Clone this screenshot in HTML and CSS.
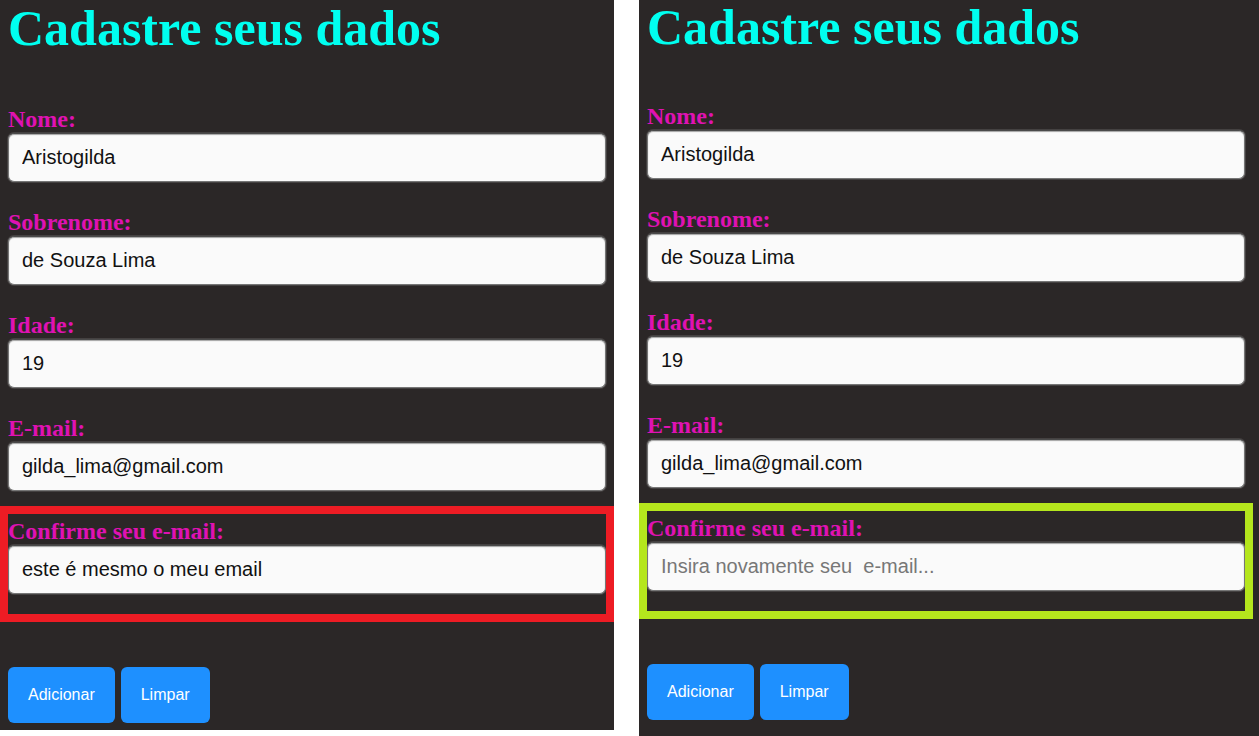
FILE: index.html
```html
<!DOCTYPE html>
<html lang="pt-BR">
<head>
<meta charset="utf-8">
<title>Cadastre seus dados</title>
<link rel="stylesheet" href="styles.css">
</head>
<body>
<div class="shots">
  <section class="panel panel--left">
    <h1 class="title">Cadastre seus dados</h1>
    <form class="form">
      <div class="field">
        <label class="label">Nome:</label>
        <input class="input" type="text" value="Aristogilda">
      </div>
      <div class="field">
        <label class="label">Sobrenome:</label>
        <input class="input" type="text" value="de Souza Lima">
      </div>
      <div class="field">
        <label class="label">Idade:</label>
        <input class="input" type="text" value="19">
      </div>
      <div class="field">
        <label class="label">E-mail:</label>
        <input class="input" type="text" value="gilda_lima@gmail.com">
      </div>
      <div class="field field--confirm field--error">
        <label class="label">Confirme seu e-mail:</label>
        <input class="input" type="text" value="este é mesmo o meu email">
      </div>
      <div class="actions">
        <button type="button" class="btn">Adicionar</button>
        <button type="button" class="btn">Limpar</button>
      </div>
    </form>
  </section>
  <section class="panel panel--right">
    <h1 class="title">Cadastre seus dados</h1>
    <form class="form">
      <div class="field">
        <label class="label">Nome:</label>
        <input class="input" type="text" value="Aristogilda">
      </div>
      <div class="field">
        <label class="label">Sobrenome:</label>
        <input class="input" type="text" value="de Souza Lima">
      </div>
      <div class="field">
        <label class="label">Idade:</label>
        <input class="input" type="text" value="19">
      </div>
      <div class="field">
        <label class="label">E-mail:</label>
        <input class="input" type="text" value="gilda_lima@gmail.com">
      </div>
      <div class="field field--confirm field--ok">
        <label class="label">Confirme seu e-mail:</label>
        <input class="input" type="text" placeholder="Insira novamente seu  e-mail...">
      </div>
      <div class="actions">
        <button type="button" class="btn">Adicionar</button>
        <button type="button" class="btn">Limpar</button>
      </div>
    </form>
  </section>
</div>
</body>
</html>
```
FILE: styles.css
```css
* {
  box-sizing: border-box;
}

html, body {
  margin: 0;
  padding: 0;
  background: #ffffff;
}

.shots {
  display: flex;
  align-items: flex-start;
  gap: 25px;
}

.panel {
  background: #2b2727;
}

.panel--left {
  width: 614px;
  height: 730px;
  padding: 0 8px;
}

.panel--right {
  width: 620px;
  height: 736px;
  padding: 0 14px 0 8px;
}

.title {
  margin: 0 0 50px;
  font-family: "Liberation Serif", "Times New Roman", serif;
  font-weight: bold;
  font-size: 50px;
  line-height: 56px;
  color: #00fff0;
  white-space: nowrap;
}

.panel--right .title {
  margin-top: -1px;
  margin-bottom: 48px;
}

.form {
  display: flex;
  flex-direction: column;
}

.field {
  display: flex;
  flex-direction: column;
  margin-bottom: 27px;
}

.label {
  font-family: "Liberation Serif", "Times New Roman", serif;
  font-weight: bold;
  font-size: 24px;
  line-height: 27px;
  color: #df12b2;
}

.input {
  width: 100%;
  height: 49px;
  margin: 0;
  padding: 0 13px;
  font-family: "Liberation Sans", Arial, sans-serif;
  font-size: 20px;
  color: #111111;
  background: #fafafa;
  border: 1px solid #767676;
  border-top-color: #4a4a4a;
  border-radius: 6px;
  box-shadow: inset 0 1px 1px rgba(0, 0, 0, 0.35), 0 0 0 1px rgba(255, 255, 255, 0.12);
  outline: none;
}

.input::placeholder {
  color: #777777;
  white-space: pre;
}

.field--confirm {
  margin-top: -4px;
  padding: 4px 0 20px;
  margin-bottom: 53px;
}

.field--error {
  outline: 8px solid #ed1c24;
}

.field--ok {
  outline: 8px solid #b5e61d;
}

.actions {
  display: flex;
  gap: 6px;
}

.btn {
  height: 56px;
  padding: 0 20px;
  border: none;
  border-radius: 6px;
  background: #1e90ff;
  color: #ffffff;
  font-family: "Liberation Sans", Arial, sans-serif;
  font-size: 16px;
}
```
